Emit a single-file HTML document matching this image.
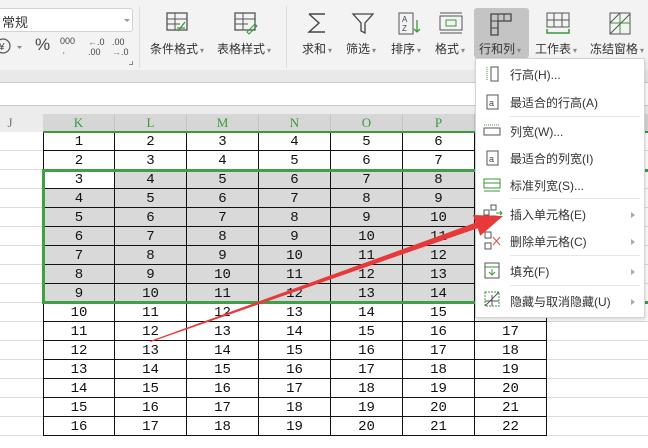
<!DOCTYPE html><html><head><meta charset="utf-8"><style>
*{margin:0;padding:0;box-sizing:border-box}
body{width:648px;height:448px;overflow:hidden;position:relative;background:#fff;font-family:"Liberation Sans","Noto Sans CJK SC",sans-serif;}
.a{position:absolute}
.rb{left:0;top:0;width:648px;height:70px;background:#f3f3f3}
.lbl{position:absolute;font-size:12px;color:#333;white-space:nowrap}
.lbl i{font-style:normal;font-size:8px;color:#888;margin-left:2px}
.cell{position:absolute;font-family:"Liberation Mono","DejaVu Sans Mono",monospace;font-size:14px;color:#111;text-align:center;line-height:21px;height:19px}
.hd{position:absolute;top:114px;height:18px;font-family:"Liberation Serif",serif;font-size:13px;color:#3a9a3a;text-align:center;line-height:18px}
.menu{left:475px;top:58px;width:170px;height:260px;background:#fff;border:1px solid #d4d4d4;box-shadow:1px 2px 4px rgba(0,0,0,.15)}
.mi{position:absolute;left:34px;font-size:12px;color:#333;white-space:nowrap}
.ar{position:absolute;left:155px;width:0;height:0;border-left:4px solid #aaa;border-top:3px solid transparent;border-bottom:3px solid transparent}
.sep{position:absolute;left:34px;width:130px;height:1px;background:#e6e6e6}
</style></head><body>
<div class="a rb"></div>
<div class="a" style="left:-4px;top:8px;width:137px;height:24px;border:1px solid #d2d2d2;border-radius:3px;background:#fff"></div>
<div class="lbl" style="left:2px;top:12px;font-size:13px">常规</div>
<div class="a" style="left:124px;top:19px;border-top:3px solid #999;border-left:3px solid transparent;border-right:3px solid transparent"></div>
<svg class="a" style="left:-3px;top:38px" width="30" height="18"><circle cx="6" cy="8" r="7" fill="none" stroke="#555" stroke-width="1.2"/><text x="2" y="12" font-size="10" fill="#444" font-family="Liberation Sans">¥</text><path d="M20 8H25L22.5 11Z" fill="#888"/></svg>
<div class="lbl" style="left:35px;top:35px;font-size:17px;color:#444">%</div>
<div class="lbl" style="left:60px;top:37px;font-size:9px;line-height:9px;color:#444">000<br><span style="color:#3a9a3a">&nbsp;,</span></div>
<div class="lbl" style="left:88px;top:37px;font-size:9px;line-height:10px;color:#444"><span style="color:#3a9a3a">←</span>.0<br>.00</div>
<div class="lbl" style="left:112px;top:37px;font-size:9px;line-height:10px;color:#444">.00<br><span style="color:#3a9a3a">→</span>.0</div>
<div class="a" style="left:129px;top:61px;width:4px;height:4px;border-right:1px solid #888;border-bottom:1px solid #888"></div>
<div class="a" style="left:139px;top:6px;width:1px;height:62px;background:#ddd"></div>
<div class="a" style="left:286px;top:6px;width:1px;height:62px;background:#ddd"></div>
<svg class="a" style="left:160px;top:10px" width="30" height="26"><rect x="7" y="3" width="20" height="17" fill="none" stroke="#555" stroke-width="1.3"/><path d="M7 9H27M7 14H20M15 3V20" stroke="#555" fill="none"/><path d="M18 21L25 12M17 18H25" stroke="#3a9a3a" stroke-width="1.3"/></svg>
<svg class="a" style="left:228px;top:10px" width="30" height="26"><rect x="7" y="3" width="20" height="17" fill="none" stroke="#555" stroke-width="1.3"/><path d="M7 9H27M7 14H20M15 3V20" stroke="#555" fill="none"/><path d="M19 22L27 14L29 16L21 24Z" stroke="#3a9a3a" fill="none"/></svg>
<div class="lbl" style="left:150px;top:40px">条件格式<i>▾</i></div>
<div class="lbl" style="left:217px;top:40px">表格样式<i>▾</i></div>
<svg class="a" style="left:305px;top:10px" width="24" height="26"><path d="M4 4H20M4 4L14 13L4 22H20" stroke="#444" fill="none" stroke-width="1.4"/></svg>
<svg class="a" style="left:350px;top:10px" width="26" height="26"><path d="M3 4H23L15 13V23L11 21V13Z" stroke="#444" fill="none" stroke-width="1.3"/></svg>
<svg class="a" style="left:397px;top:10px" width="26" height="26"><rect x="2" y="3" width="14" height="21" fill="none" stroke="#555"/><text x="5" y="12" font-size="8" fill="#444" font-family="Liberation Sans">A</text><text x="5" y="21" font-size="8" fill="#444" font-family="Liberation Sans">Z</text><path d="M20 10V22M17 19L20 22L23 19" stroke="#3a9a3a" fill="none" stroke-width="1.3"/></svg>
<svg class="a" style="left:437px;top:10px" width="28" height="26"><path d="M3 3H25M3 23H25" stroke="#555"/><rect x="3" y="6" width="22" height="14" fill="none" stroke="#555"/><rect x="9" y="10" width="10" height="6" fill="none" stroke="#3a9a3a"/></svg>
<div class="a" style="left:474px;top:8px;width:55px;height:50px;background:#c4c4c4;border-radius:3px"></div>
<svg class="a" style="left:487px;top:11px" width="28" height="26"><path d="M4 3H24V10H11V24H4Z" fill="none" stroke="#444" stroke-width="1.3"/><path d="M11 3V10M17 3V10M4 10H11M4 17H11" stroke="#444"/></svg>
<svg class="a" style="left:544px;top:10px" width="28" height="26"><rect x="3" y="3" width="22" height="14" fill="none" stroke="#555"/><path d="M3 10H25M10 3V17M18 3V17" stroke="#555"/><path d="M3 19V23H25V19" stroke="#3a9a3a" fill="none" stroke-width="1.5"/></svg>
<svg class="a" style="left:606px;top:10px" width="28" height="26"><rect x="4" y="3" width="20" height="21" fill="none" stroke="#555"/><path d="M14 3V24M4 13H24" stroke="#3a9a3a"/><path d="M4 13L14 3M4 24L24 4" stroke="#555"/></svg>
<div class="lbl" style="left:302px;top:40px">求和<i>▾</i></div>
<div class="lbl" style="left:346px;top:40px">筛选<i>▾</i></div>
<div class="lbl" style="left:391px;top:40px">排序<i>▾</i></div>
<div class="lbl" style="left:435px;top:40px">格式<i>▾</i></div>
<div class="lbl" style="left:479px;top:40px">行和列<i>▾</i></div>
<div class="lbl" style="left:535px;top:40px">工作表<i>▾</i></div>
<div class="lbl" style="left:590px;top:40px">冻结窗格<i>▾</i></div>
<div class="a" style="left:0;top:70px;width:648px;height:12px;background:#e9e9e9"></div>
<div class="a" style="left:0;top:82px;width:648px;height:1px;background:#c8c8c8"></div>
<div class="a" style="left:0;top:105px;width:648px;height:1px;background:#c8c8c8"></div>
<div class="a" style="left:0;top:106px;width:648px;height:26px;background:#ececec"></div>
<div class="a" style="left:43px;top:114px;width:605px;height:18px;background:#d6d6d6"></div>
<div class="hd" style="left:0;width:20px;color:#777">J</div>
<div id="g"></div>
<div class="a menu">
<svg class="a" style="left:9px;top:7px" width="16" height="16"><path d="M2 1V15" stroke="#3a9a3a" stroke-dasharray="1 1"/><rect x="6" y="1" width="7" height="14" fill="none" stroke="#555"/></svg>
<div class="mi" style="top:7px">行高(H)...</div>
<svg class="a" style="left:9px;top:35px" width="16" height="16"><rect x="2" y="1" width="11" height="14" fill="none" stroke="#555"/><text x="4" y="12" font-size="9" fill="#444">a</text></svg>
<div class="mi" style="top:35px">最适合的行高(A)</div>
<div class="sep" style="top:57px"></div>
<svg class="a" style="left:6px;top:63px" width="20" height="16"><path d="M2 3H18" stroke="#3a9a3a" stroke-dasharray="1 1"/><rect x="2" y="6" width="16" height="7" fill="none" stroke="#555"/></svg>
<div class="mi" style="top:64px">列宽(W)...</div>
<svg class="a" style="left:9px;top:91px" width="16" height="16"><rect x="2" y="1" width="11" height="14" fill="none" stroke="#555"/><text x="4" y="12" font-size="9" fill="#444">a</text></svg>
<div class="mi" style="top:91px">最适合的列宽(I)</div>
<svg class="a" style="left:6px;top:118px" width="20" height="16"><rect x="2" y="2" width="16" height="9" fill="none" stroke="#3a9a3a"/><path d="M2 6H18M2 14H18" stroke="#3a9a3a"/></svg>
<div class="mi" style="top:118px">标准列宽(S)...</div>
<div class="sep" style="top:139px"></div>
<svg class="a" style="left:6px;top:145px" width="22" height="20"><rect x="2" y="6" width="5" height="5" fill="none" stroke="#555"/><rect x="9" y="1" width="5" height="5" fill="none" stroke="#555"/><rect x="9" y="12" width="5" height="5" fill="none" stroke="#555"/><path d="M14 9H20M18 7L20 9L18 11" stroke="#3a9a3a" fill="none"/></svg>
<div class="mi" style="top:147px">插入单元格(E)</div><div class="ar" style="top:153px"></div>
<svg class="a" style="left:6px;top:172px" width="22" height="20"><rect x="3" y="1" width="6" height="6" fill="none" stroke="#555"/><rect x="3" y="12" width="6" height="6" fill="none" stroke="#555"/><path d="M11 6L18 14M18 6L11 14" stroke="#e05050"/></svg>
<div class="mi" style="top:174px">删除单元格(C)</div><div class="ar" style="top:180px"></div>
<div class="sep" style="top:196px"></div>
<svg class="a" style="left:8px;top:203px" width="18" height="18"><rect x="1" y="1" width="14" height="15" fill="none" stroke="#555"/><path d="M1 5H15M8 7V13M5 10L8 13L11 10" stroke="#3a9a3a" fill="none"/></svg>
<div class="mi" style="top:204px">填充(F)</div><div class="ar" style="top:210px"></div>
<div class="sep" style="top:226px"></div>
<svg class="a" style="left:8px;top:232px" width="18" height="18"><rect x="1" y="1" width="14" height="14" fill="none" stroke="#3a9a3a" stroke-dasharray="2 1"/><path d="M1 15L15 1M1 10H15M8 4V15" stroke="#555"/></svg>
<div class="mi" style="top:234px">隐藏与取消隐藏(U)</div><div class="ar" style="top:240px"></div>
</div>
<svg class="a" style="left:0;top:0;z-index:5" width="648" height="448"><polygon points="150,341 475.6,222.6 472.9,215 503,216 480.3,235.8 477.6,228.2 150.5,342" fill="#e8393a"/></svg>
<script>
var h='',xs=[43,115,187,259,331,403,475,547],L='KLMNOPQ';
for(var r=0;r<16;r++){var y=132+r*19;
 h+='<div class="a" style="left:0;top:'+(y+18)+'px;width:43px;height:1px;background:#dcdcdc"></div>';
 h+='<div class="a" style="left:547px;top:'+(y+18)+'px;width:101px;height:1px;background:#dcdcdc"></div>';
 for(var c=0;c<7;c++){var sel=r>=2&&r<=8&&!(r==2&&c==0);
  h+='<div class="cell" style="left:'+xs[c]+'px;top:'+y+'px;width:72px;background:'+(sel?'#d9d9d9':'#fff')+';border-right:1px solid #111;border-bottom:1px solid #111;'+(c==0?'border-left:1px solid #111;':'')+'">'+(r+1+c)+'</div>';}}
for(var c=0;c<7;c++)h+='<div class="hd" style="left:'+xs[c]+'px;width:72px;border-right:1px solid #c4c4c4">'+L[c]+'</div>';
h+='<div class="a" style="left:43px;top:131px;width:605px;height:2px;background:#3a9a3a"></div>';
h+='<div class="a" style="left:42px;top:169px;width:610px;height:135px;border:3px solid #3fa046"></div>';
document.getElementById('g').innerHTML=h;
</script>
</body></html>
